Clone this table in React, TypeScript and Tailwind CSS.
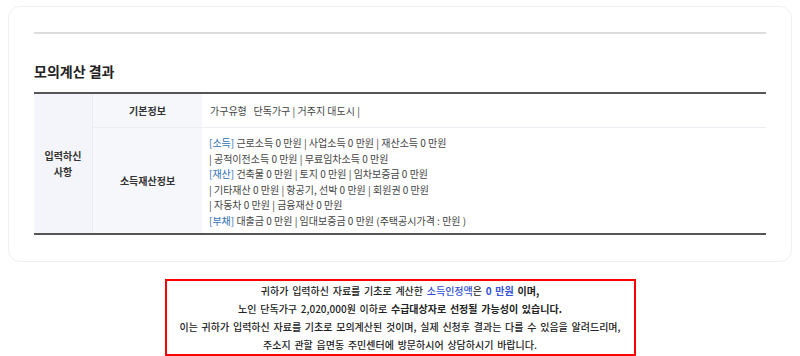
const font = {
  fontFamily: '"Noto Sans CJK KR", "Noto Sans", sans-serif',
};

function Tag({ children }: { children: React.ReactNode }) {
  return <span className="text-[#2f6fb5]">{children}</span>;
}

export default function App() {
  return (
    <div
      className="w-[800px] h-[356px] bg-white px-[8px] pt-[6px] overflow-hidden"
      style={font}
    >
      {/* Result card */}
      <section className="rounded-[12px] border border-[#efefef] px-[25px] pt-[25px] pb-[26px]">
        <div className="h-[2px] bg-[#dcdcdc]" />
        <h2 className="mt-[27px] mb-[11px] text-[14px] leading-[20px] font-bold text-[#222]">
          모의계산 결과
        </h2>
        <div className="border-t-2 border-b-2 border-[#555] grid grid-cols-[59px_109px_1fr] text-[10px] text-[#444]">
          <div className="row-span-2 bg-[#f4f5fa] border-r border-[#e9ebf2] flex items-center justify-center text-center font-bold text-[#333] leading-[15.5px]">
            입력하신
            <br />
            사항
          </div>
          <div className="bg-[#f6f7fb] h-[34px] flex items-center justify-center font-bold text-[#333] border-b border-[#eceef4]">
            기본정보
          </div>
          <div className="h-[34px] flex items-center pl-[8px] border-b border-[#eceef4]">
            가구유형&nbsp;&nbsp;&nbsp;단독가구 | 거주지 대도시 |
          </div>
          <div className="bg-[#f6f7fb] flex items-center justify-center font-bold text-[#333]">
            소득재산정보
          </div>
          <div className="pl-[7px] pt-[7px] pb-[5px] leading-[15.5px]">
            <div>
              <Tag>[소득]</Tag> 근로소득 0 만원 | 사업소득 0 만원 | 재산소득 0 만원
            </div>
            <div>| 공적이전소득 0 만원 | 무료임차소득 0 만원</div>
            <div>
              <Tag>[재산]</Tag> 건축물 0 만원 | 토지 0 만원 | 임차보증금 0 만원
            </div>
            <div>| 기타재산 0 만원 | 항공기, 선박 0 만원 | 회원권 0 만원</div>
            <div>| 자동차 0 만원 | 금융재산 0 만원</div>
            <div>
              <Tag>[부채]</Tag> 대출금 0 만원 | 임대보증금 0 만원 (주택공시가격 : 만원 )
            </div>
          </div>
        </div>
      </section>

      {/* Notice */}
      <div className="mx-auto mt-[17px] w-[471px] border-2 border-[#f00] text-center text-[10px] leading-[18px] font-medium text-[#222] [word-spacing:1.5px] pt-[1px]">
        <p>
          귀하가 입력하신 자료를 기초로 계산한{" "}
          <span className="text-[#3050d8]">소득인정액</span>은{" "}
          <strong className="text-[#3050d8] font-bold">0 만원</strong>{" "}
          <strong className="font-bold">이며,</strong>
        </p>
        <p>
          노인 단독가구 2,020,000원 이하로{" "}
          <strong className="font-bold">수급대상자로 선정될 가능성이 있습니다.</strong>
        </p>
        <p>
          이는 귀하가 입력하신 자료를 기초로 모의계산된 것이며, 실제 신청후 결과는 다를 수
          있음을 알려드리며,
        </p>
        <p>주소지 관할 읍면동 주민센터에 방문하시어 상담하시기 바랍니다.</p>
      </div>
    </div>
  );
}
